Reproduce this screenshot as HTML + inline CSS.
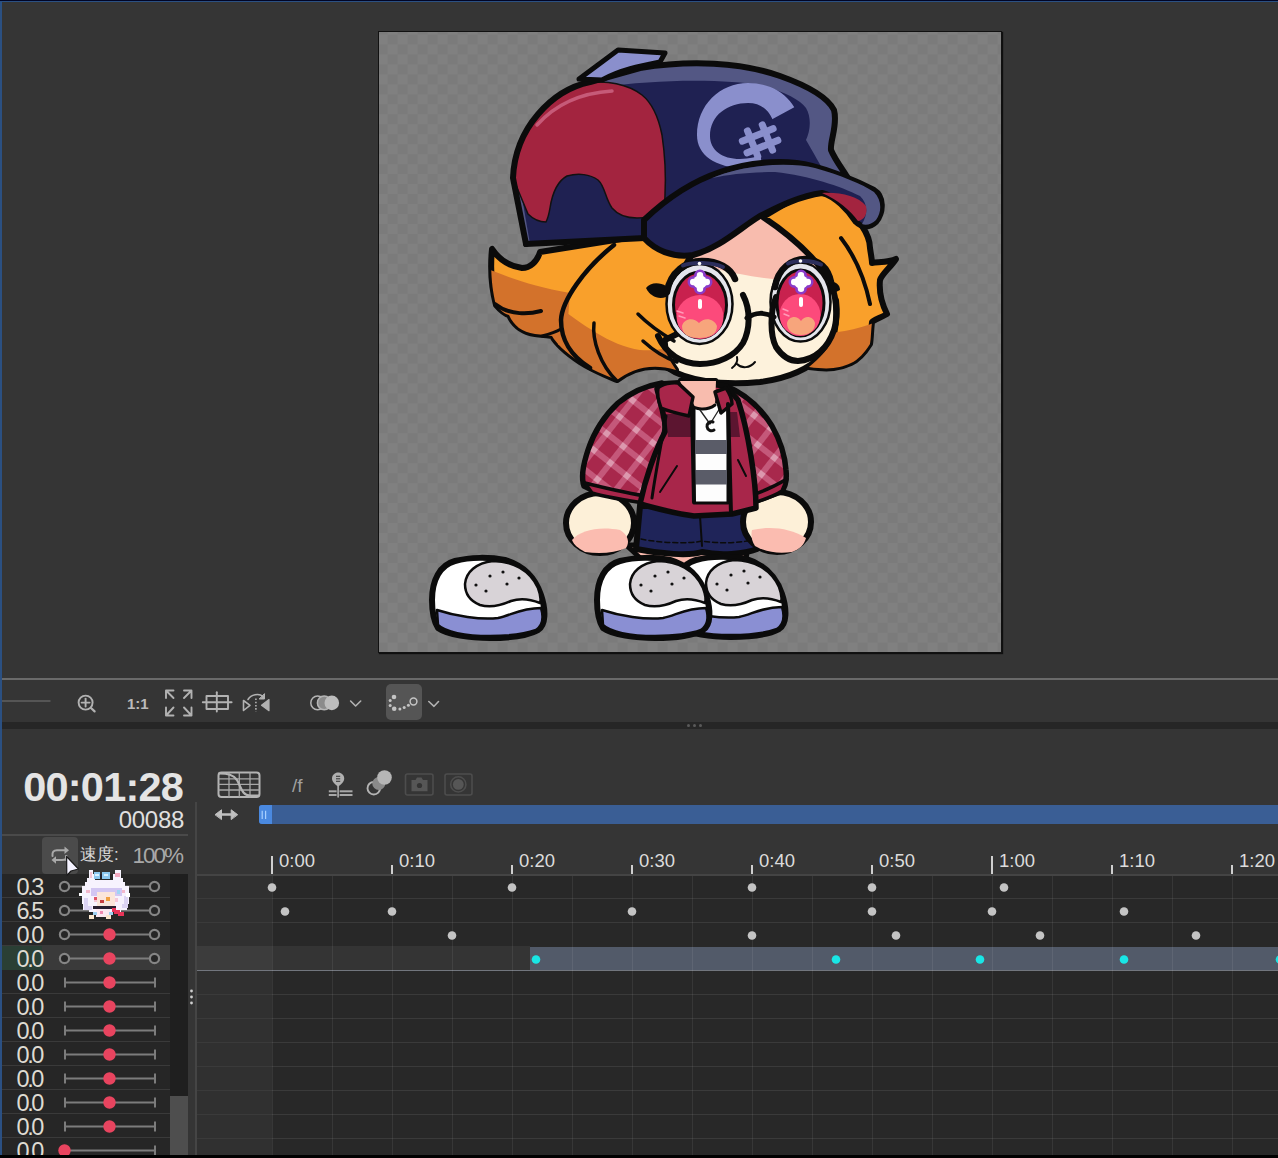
<!DOCTYPE html><html><head><meta charset="utf-8"><style>*{margin:0;padding:0;box-sizing:border-box}
html,body{width:1278px;height:1158px;overflow:hidden;background:#353535;font-family:"Liberation Sans",sans-serif}
.a{position:absolute}
#topdark{left:0;top:0;width:1278px;height:1px;background:#000526;z-index:60}
#topblue{left:0;top:1px;width:1278px;height:1px;background:#2b5082;z-index:60}
#leftblue{left:0;top:1px;width:2px;height:1158px;background:#2b5082;z-index:50}
#canvas{left:378px;top:31px;width:624px;height:622px;background:#7a7a7a;border:1px solid #111;overflow:hidden;box-shadow:1px 1px 1px rgba(0,0,0,0.7)}
#hline{left:0;top:678px;width:1278px;height:2px;background:#6a6a6a}
#band{left:0;top:722px;width:1278px;height:7px;background:#262626}
.dot3{width:3px;height:3px;border-radius:50%;background:#5a5a5a;top:724px}
#tbbtn{left:386px;top:684px;width:36px;height:36px;background:#555;border-radius:5px}
#timecode{left:10px;top:764px;width:173px;text-align:right;font-weight:bold;font-size:41.5px;letter-spacing:-0.8px;color:#e4e4e4;line-height:45px}
#frames{left:90px;top:806px;width:94px;text-align:right;font-size:24px;letter-spacing:-0.3px;color:#e0e0e0;line-height:27px}
#sep{left:0;top:834px;width:188px;height:2px;background:#4a4a4a}
#loopbtn{left:42px;top:837px;width:36px;height:37px;background:#4b4b4b;border-radius:4px}
#speed{left:80px;top:844px;font-size:17px;color:#d8d8d8;line-height:22px}
#pct{left:132.5px;top:845px;font-size:22.5px;letter-spacing:-2px;color:#a8a8a8;line-height:22px}
#leftrows{left:2px;top:874px;width:168px;height:284px;background:#262626}
.row{position:absolute;left:0;width:168px;height:24px;border-bottom:1px solid #3a3a3a}
.row.sel{background:#3a3a3a}
.val{position:absolute;left:14.5px;font-size:23.5px;letter-spacing:-2.4px;color:#dedbd2;line-height:22px}
#sb{left:170px;top:874px;width:18px;height:284px;background:#1f1f1f}
#sbthumb{left:170px;top:1096px;width:18px;height:62px;background:#4e4e4e}
#vline{left:195px;top:802px;width:2px;height:356px;background:#454545}
#bottomblack{left:0;top:1155px;width:1278px;height:3px;background:#000;z-index:70}
#bluebar{left:259px;top:805px;width:1019px;height:19px;background:#3a5e95;border-radius:3px 0 0 3px}
#handle{left:259px;top:805px;width:13px;height:19px;background:#4a89e0;border-radius:3px 0 0 3px}
</style></head><body><div id="topdark" class="a"></div><div id="topblue" class="a"></div><div id="leftblue" class="a"></div><div id="canvas" class="a"><svg width="622" height="620" viewBox="379 32 622 620" style="position:absolute;left:0;top:0"><defs><pattern id="chk" width="20" height="19.94" patternUnits="userSpaceOnUse" x="377.6" y="34.5"><rect width="20" height="19.94" fill="#7b7b7b"/><rect width="10" height="9.97" fill="#808080"/><rect x="10" y="9.97" width="10" height="9.97" fill="#808080"/></pattern></defs><rect x="379" y="32" width="622" height="620" fill="url(#chk)"/><defs>
<clipPath id="faceclip"><path d="M 650,290 C 650,240 700,212 750,212 C 800,212 845,245 845,295 C 845,345 815,375 760,382 C 720,386 685,380 668,368 C 655,350 650,320 650,290 Z"/></clipPath>
<clipPath id="lhclip"><path d="M 640,236 L 540,252 C 537,262 530,268 522,268 C 508,266 498,258 492,249 C 490,270 492,290 496,305 C 502,312 505,314 509,315 C 514,326 522,332 535,334 C 542,335 548,335 552,336 C 556,343 565,352 580,362 C 592,370 605,375 617,380 C 630,370 650,362 676,370 C 668,358 664,350 665,340 L 685,330 L 685,280 C 680,270 690,255 700,248 Z"/></clipPath>
<clipPath id="rhclip"><path d="M 763,217 L 800,195 L 845,188 L 868,215 L 862,226 C 868,235 870,242 870,248 C 871,255 872,260 872,263 C 880,262 890,262 896,259 C 890,268 882,274 880,280 C 879,290 880,300 887,314 C 880,318 874,320 872,322 C 871,330 871,338 870,344 C 865,352 858,360 851,363 C 840,368 830,370 809,367 C 820,358 830,348 834,335 C 838,315 836,295 830,280 C 815,258 790,235 763,217 Z"/></clipPath>
<clipPath id="lslv"><path d="M 657,390 C 640,392 625,396 612,405 C 598,418 590,432 586,450 C 582,465 582,478 586,486 C 588,490 592,492 596,492 L 637,502 L 668,440 Z"/></clipPath>
<clipPath id="rslv"><path d="M 730,393 C 748,400 766,414 778,432 C 784,448 787,465 786,478 C 785,488 780,493 776,495 L 753,502 L 728,440 Z"/></clipPath>
<pattern id="plaid" width="21" height="21" patternUnits="userSpaceOnUse" patternTransform="rotate(38)">
<rect width="21" height="21" fill="#a8284c"/>
<rect x="0" y="7" width="21" height="6" fill="#c4587a"/>
<rect x="7" y="0" width="6" height="21" fill="#c4587a"/>
<rect x="7" y="7" width="6" height="6" fill="#dc98ae"/>
</pattern>

</defs>
<g stroke-linejoin="round" stroke-linecap="round">
<!-- FACE -->
<path d="M 650,290 C 650,240 700,212 750,212 C 800,212 845,245 845,295 C 845,345 815,375 760,382 C 720,386 685,380 668,368 C 655,350 650,320 650,290 Z" fill="#fdf2dc" stroke="#0b0b0b" stroke-width="6"/>
<path clip-path="url(#faceclip)" d="M 640,258 C 690,262 720,270 740,274 C 770,280 800,282 850,282 L 850,200 L 640,200 Z" fill="#f8bcae"/>
<!-- neck -->
<path d="M 680,380 L 716,380 L 718,410 L 684,410 Z" fill="#f8bcae" stroke="#0b0b0b" stroke-width="4"/>
<!-- LEFT HAIR -->
<path d="M 640,236 L 540,252 C 537,262 530,268 522,268 C 508,266 498,258 492,249 C 490,270 492,290 496,305 C 502,312 505,314 509,315 C 514,326 522,332 535,334 C 542,335 548,335 552,336 C 556,343 565,352 580,362 C 592,370 605,375 617,380 C 630,370 650,362 676,370 C 668,358 664,350 665,340 L 685,330 L 685,280 C 680,270 690,255 700,248 Z" fill="#f9a02b" stroke="#0b0b0b" stroke-width="6"/>
<g clip-path="url(#lhclip)" fill="#d3722b">
<path d="M 480,266 C 505,276 530,286 570,293 L 566,345 L 480,345 Z"/>
<path d="M 560,308 C 580,322 610,346 640,350 C 660,352 680,345 700,338 L 700,400 L 555,400 Z"/>
</g>
<g fill="none" stroke="#0b0b0b">
<path d="M 495,304 C 510,316 530,314 541,311" stroke-width="4"/>
<path d="M 617,381 C 600,365 592,340 594,323" stroke-width="3.5"/>
<path d="M 614,245 C 585,268 562,300 561,320 C 561,340 570,355 590,368" stroke-width="4.5"/>
<path d="M 542,336 C 550,334 556,332 561,329" stroke-width="3"/>
<path d="M 638,314 C 650,326 662,334 674,341" stroke-width="3.5"/>
<path d="M 643,341 C 655,352 665,358 677,362" stroke-width="3.5"/>
</g>
<!-- RIGHT HAIR -->
<path d="M 763,217 L 800,195 L 845,188 L 868,215 L 862,226 C 868,235 870,242 870,248 C 871,255 872,260 872,263 C 880,262 890,262 896,259 C 890,268 882,274 880,280 C 879,290 880,300 887,314 C 880,318 874,320 872,322 C 871,330 871,338 870,344 C 865,352 858,360 851,363 C 840,368 830,370 809,367 C 820,358 830,348 834,335 C 838,315 836,295 830,280 C 815,258 790,235 763,217 Z" fill="#f9a02b" stroke="#0b0b0b" stroke-width="6"/>
<g clip-path="url(#rhclip)" fill="#d3722b"><path d="M 800,332 C 830,336 860,330 885,318 L 885,380 L 800,380 Z"/></g>
<path d="M 841,238 C 858,260 866,285 870,304" fill="none" stroke="#0b0b0b" stroke-width="4"/>
<!-- HAT DOME -->
<path d="M 526,244 L 513,178 C 515,128 552,90 590,82 L 640,68 C 690,60 740,62 780,76 C 808,86 828,98 834,110 C 838,125 830,140 831,150 C 836,162 845,172 850,182 L 760,215 L 645,240 Z" fill="#535784" stroke="none"/>
<path d="M 530,244 L 519,180 C 524,135 560,98 600,88 C 660,78 730,80 760,85 C 785,92 800,100 806,108 C 812,118 810,132 806,140 C 812,150 820,165 832,185 L 760,212 L 645,236 Z" fill="#1f2152"/>
<path d="M 513,178 C 515,130 550,92 590,83 C 605,80 628,84 642,95 C 652,103 658,115 662,135 C 665,155 666,175 665,195 C 665,204 664,208 662,212 C 656,217 648,218 637,218 C 625,218 617,214 612,208 C 605,198 605,186 598,180 C 590,174 578,173 567,176 C 556,182 552,195 550,208 C 549,214 548,218 546,222 C 538,222 532,218 528,214 Z" fill="#a3243f" stroke="#111" stroke-width="1.5"/>
<path d="M 537,125 C 555,105 580,93 612,91" fill="none" stroke="#c65a78" stroke-width="3.5"/>
<path d="M 526,244 L 513,178 C 515,128 552,90 590,82 L 640,68 C 690,60 740,62 780,76 C 808,86 828,98 834,110 C 838,125 830,140 831,150 C 836,162 845,172 850,182" fill="none" stroke="#0b0b0b" stroke-width="6"/>
<path d="M 526,244 L 645,238" fill="none" stroke="#0b0b0b" stroke-width="6"/>
<!-- tab -->
<path d="M 579,79 L 618,50 L 665,53 L 660,62 C 640,66 620,70 602,80 Z" fill="#8a8fcc" stroke="#0b0b0b" stroke-width="5"/>
<!-- C# -->
<clipPath id="cclip"><path d="M 680,60 L 815,60 L 815,96 L 758,127 L 765,200 L 680,200 Z"/></clipPath><path clip-path="url(#cclip)" fill-rule="evenodd" fill="#8a8fcc" d="M 697,135 C 697,105 720,83 748,83 C 780,83 800,105 800,128 C 800,155 775,168 745,168 C 715,168 697,155 697,135 Z M 710,136 C 710,115 728,103 748,103 C 768,103 775,120 775,133 C 775,150 760,159 740,159 C 722,159 710,150 710,136 Z"/>
<g transform="translate(760,140.5) rotate(-22)" fill="#8a8fcc">
<rect x="-11.5" y="-17" width="7" height="34" rx="3"/>
<rect x="4.5" y="-17" width="7" height="34" rx="3"/>
<rect x="-20" y="-9.5" width="40" height="7" rx="3"/>
<rect x="-20" y="3" width="40" height="7" rx="3"/>
</g>
<!-- BRIM -->
<path d="M 644,220 C 665,200 690,182 720,172 C 755,160 790,160 812,166 C 835,172 860,183 874,190 C 884,196 884,212 876,222 C 870,228 862,228 856,222 C 848,210 835,196 822,193 C 800,196 780,206 760,216 C 740,228 720,248 693,255 C 672,258 655,250 644,238 Z" fill="#1f2152" stroke="#0b0b0b" stroke-width="6"/>
<path d="M 712,178 C 745,164 790,162 815,168 C 840,175 862,184 874,192 C 882,200 882,212 876,220 C 872,224 866,226 862,224 C 868,214 868,204 860,196 C 840,186 810,176 775,172 C 750,172 730,174 712,178 Z" fill="#535784"/>
<path d="M 822,193 C 840,192 858,196 866,206 C 868,214 864,220 858,221 C 850,210 838,200 822,193 Z" fill="#a3243f"/>
<!-- EYES -->
<path d="M 646,288 C 650,282 660,282 666,286 L 666,297 C 658,300 650,296 646,288 Z" fill="#0b0b0b"/>
<path d="M 828,282 C 834,280 840,284 840,290 L 830,295 Z" fill="#0b0b0b"/>
<ellipse cx="699.5" cy="304" rx="33" ry="40" fill="#e4e5ec" stroke="#0b0b0b" stroke-width="2.5"/>
<ellipse cx="800.5" cy="302" rx="30" ry="39.5" fill="#e4e5ec" stroke="#0b0b0b" stroke-width="2.5"/>
<ellipse cx="700" cy="305" rx="26.5" ry="33" fill="#c8214e" stroke="#0b0b0b" stroke-width="3"/>
<ellipse cx="800.5" cy="303" rx="23.5" ry="33" fill="#c8214e" stroke="#0b0b0b" stroke-width="3"/>
<ellipse cx="700" cy="317" rx="23.5" ry="22" fill="#fc4a7b"/>
<ellipse cx="800" cy="315" rx="20.5" ry="21" fill="#fc4a7b"/>
<path d="M 682,326 C 684,318 694,317 699,323 C 704,317 714,318 717,326 C 717,334 710,338 699,338 C 688,338 682,334 682,326 Z" fill="#f7a57c"/>
<path d="M 787,323 C 789,316 797,315 801,321 C 805,315 813,316 815,323 C 815,331 809,335 801,335 C 793,335 787,331 787,323 Z" fill="#f7a57c"/>
<g><rect x="695.5" y="271" width="9" height="22" rx="4.5" fill="#8a3cc8" stroke="#8a3cc8" stroke-width="3"/><rect x="689" y="277.5" width="22" height="9" rx="4.5" fill="#8a3cc8" stroke="#8a3cc8" stroke-width="3"/><circle cx="700" cy="282" r="7.5" fill="#8a3cc8" stroke="#8a3cc8" stroke-width="3"/><rect x="696.8" y="272" width="6.4" height="20" rx="3.2" fill="#fff"/><rect x="690" y="278.8" width="20" height="6.4" rx="3.2" fill="#fff"/><circle cx="700" cy="282" r="6.8" fill="#fff"/></g>
<g><rect x="796.5" y="271" width="9" height="22" rx="4.5" fill="#8a3cc8" stroke="#8a3cc8" stroke-width="3"/><rect x="790" y="277.5" width="22" height="9" rx="4.5" fill="#8a3cc8" stroke="#8a3cc8" stroke-width="3"/><circle cx="801" cy="282" r="7.5" fill="#8a3cc8" stroke="#8a3cc8" stroke-width="3"/><rect x="797.8" y="272" width="6.4" height="20" rx="3.2" fill="#fff"/><rect x="791" y="278.8" width="20" height="6.4" rx="3.2" fill="#fff"/><circle cx="801" cy="282" r="6.8" fill="#fff"/></g>
<rect x="698" y="299" width="4" height="10" rx="2" fill="#fff"/>
<rect x="799" y="297" width="4" height="10" rx="2" fill="#fff"/>
<path d="M 667,292 C 670,272 686,261 702,261 C 718,261 731,268 735,279" fill="none" stroke="#0b0b0b" stroke-width="6.5"/>
<path d="M 683,265.5 C 692,262 712,262 723,267" fill="none" stroke="#2c2f5c" stroke-width="4"/>
<path d="M 775,287 C 778,268 792,259 805,259 C 819,260 828,268 831,282" fill="none" stroke="#0b0b0b" stroke-width="6.5"/>
<path d="M 788,263.5 C 796,260 812,260 821,264.5" fill="none" stroke="#2c2f5c" stroke-width="4"/>
<circle cx="699.5" cy="263.5" r="1.8" fill="#fff"/><circle cx="800.5" cy="261" r="1.8" fill="#fff"/>
<path d="M 677,311 L 683,313 M 679,316 L 685,318" stroke="#ff9ab8" stroke-width="1.5" fill="none"/>
<path d="M 783,309 L 788,311 M 784,314 L 789,316" stroke="#ff9ab8" stroke-width="1.5" fill="none"/>
<!-- frames -->
<path d="M 743,295 C 751,310 750,330 743,343 C 735,356 718,364 700,364 C 682,364 666,354 658,336" fill="none" stroke="#0b0b0b" stroke-width="6"/>
<path d="M 776,297 C 770,312 770,335 776,347 C 782,356 790,361 798,361 C 815,360 828,348 834,330 C 838,318 837,308 836,300" fill="none" stroke="#0b0b0b" stroke-width="6"/>
<path d="M 747,318 C 755,312 765,312 774,317" fill="none" stroke="#0b0b0b" stroke-width="5"/>
<path d="M 732,368 C 736,365 738,361 737,357 M 737,364 C 742,369 750,368 755,362" fill="none" stroke="#0b0b0b" stroke-width="2"/>
<!-- BODY -->
<path d="M 626,545 L 650,567 L 745,567 L 748,545 Z" fill="#fbbcb0" stroke="#0b0b0b" stroke-width="5"/>
<path d="M 640,506 L 636,549 C 660,554 690,556 702,552 C 720,556 745,554 757,549 L 752,506 Z" fill="#1f2459" stroke="#0b0b0b" stroke-width="6"/>
<path d="M 641,539 C 660,543 690,544 702,541 C 720,544 742,543 756,539" fill="none" stroke="#0b0b0b" stroke-width="1.5" stroke-dasharray="5,3"/>
<path d="M 700,516 L 702,546" fill="none" stroke="#0b0b0b" stroke-width="2"/>
<!-- hands -->
<ellipse cx="600" cy="523" rx="34" ry="30" fill="#fdf0d8" stroke="#0b0b0b" stroke-width="6"/>
<path d="M 572,540 C 580,530 600,526 620,530 C 628,535 630,542 626,548 C 615,553 600,554 585,552 C 578,548 574,545 572,540 Z" fill="#fbbcb0"/>
<ellipse cx="777" cy="522" rx="34" ry="30" fill="#fdf0d8" stroke="#0b0b0b" stroke-width="6"/>
<path d="M 752,530 C 770,526 790,528 806,538 C 804,545 800,549 792,552 C 778,554 765,552 755,546 C 751,540 751,534 752,530 Z" fill="#fbbcb0"/>
<!-- sleeves -->
<path d="M 662,383 C 645,386 630,393 618,403 C 604,416 594,432 588,450 C 583,465 581,478 584,486 L 594,491 L 648,501 L 666,440 Z" fill="url(#plaid)" stroke="#0b0b0b" stroke-width="5.5"/>
<path d="M 585,483 C 605,488 630,494 652,497 L 651,504 C 630,501 605,497 592,493 Z" fill="#a8264a" stroke="#0b0b0b" stroke-width="3.5"/>
<path d="M 726,386 C 746,394 762,410 772,426 C 780,440 785,456 786,470 C 787,480 785,488 781,492 L 756,501 L 733,440 Z" fill="url(#plaid)" stroke="#0b0b0b" stroke-width="5.5"/>
<path d="M 787,479 C 775,486 765,491 752,495 L 753,503 C 766,499 776,495 782,491 Z" fill="#a8264a" stroke="#0b0b0b" stroke-width="3.5"/>
<!-- jacket -->
<path d="M 660,384 L 690,382 L 726,386 L 738,400 C 748,430 756,480 756,508 L 732,514 L 694,516 C 672,513 655,508 640,504 C 645,480 655,450 666,430 C 664,415 660,400 657,389 Z" fill="#a8264a" stroke="#0b0b0b" stroke-width="5.5"/>
<path d="M 666,414 L 692,414 L 692,437 L 668,437 Z" fill="#5c1530"/>
<path d="M 727,412 L 737,412 L 740,437 L 727,437 Z" fill="#5c1530"/>
<!-- shirt -->
<path d="M 694,402 L 728,402 L 728,503 L 694,503 Z" fill="#fdfdfd" stroke="#0b0b0b" stroke-width="3"/>
<rect x="695" y="440" width="32" height="14" fill="#5a5c68"/>
<rect x="695" y="470" width="32" height="14.5" fill="#5a5c68"/>
<path d="M 680,381 L 716,381 L 715,405 C 705,410 695,409 690,404 Z" fill="#f8bcae" stroke="none"/><path d="M 690,404 C 695,410 707,411 715,405" fill="none" stroke="#0b0b0b" stroke-width="3"/>
<path d="M 700,410 L 710,424 L 720,408" fill="none" stroke="#222" stroke-width="1.3"/>
<path d="M 713,422 a 4.5 4.5 0 1 0 1 8" fill="none" stroke="#111" stroke-width="3"/>
<path d="M 658,388 C 662,384 672,382 678,383 L 693,397 L 689,416 C 680,414 668,411 661,408 C 658,400 657,393 658,388 Z" fill="#a8264a" stroke="#0b0b0b" stroke-width="3.5"/>
<path d="M 715,392 L 726,388 C 730,394 732,400 732,404 L 721,413 Z" fill="#a8264a" stroke="#0b0b0b" stroke-width="3.5"/>
<path d="M 692,405 L 694,502 M 728,404 L 731,514" fill="none" stroke="#0b0b0b" stroke-width="4"/>
<path d="M 666,416 C 662,440 656,470 652,498" fill="none" stroke="#0b0b0b" stroke-width="3"/>
<path d="M 677,466 L 660,492 M 738,460 L 746,476" fill="none" stroke="#0b0b0b" stroke-width="2"/>
<!-- shoes -->
<g transform="translate(241,-1)">
<path d="M 432,600 C 432,580 440,565 455,561 C 470,557 490,557 505,560 C 522,565 535,577 541,595 C 546,610 546,625 538,630 C 525,637 505,638 490,638 C 470,638 448,635 438,628 C 433,620 432,610 432,600 Z" fill="#ffffff" stroke="#0b0b0b" stroke-width="6"/>
<path d="M 465,584 C 466,572 476,563 493,561 C 512,561 530,570 538,588 C 541,596 541,600 540,603 C 530,599 520,598 511,601 C 500,606 490,608 480,605 C 470,601 465,594 465,584 Z" fill="#d8d3d7" stroke="#0b0b0b" stroke-width="2.5"/>
<path d="M 437,610 C 455,616 480,620 498,618 C 510,616 520,608 541,608 C 544,618 542,626 536,630 C 520,636 500,636 490,636 C 465,636 445,632 438,625 Z" fill="#8a8fd3" stroke="#0b0b0b" stroke-width="2.5"/>
<g fill="#111"><circle cx="476" cy="585" r="1.6"/><circle cx="486" cy="591" r="1.6"/><circle cx="490" cy="576" r="1.6"/><circle cx="503" cy="572" r="1.6"/><circle cx="507" cy="584" r="1.6"/><circle cx="519" cy="578" r="1.6"/></g>
</g>
<g>
<path d="M 432,600 C 432,580 440,565 455,561 C 470,557 490,557 505,560 C 522,565 535,577 541,595 C 546,610 546,625 538,630 C 525,637 505,638 490,638 C 470,638 448,635 438,628 C 433,620 432,610 432,600 Z" fill="#ffffff" stroke="#0b0b0b" stroke-width="6"/>
<path d="M 465,584 C 466,572 476,563 493,561 C 512,561 530,570 538,588 C 541,596 541,600 540,603 C 530,599 520,598 511,601 C 500,606 490,608 480,605 C 470,601 465,594 465,584 Z" fill="#d8d3d7" stroke="#0b0b0b" stroke-width="2.5"/>
<path d="M 437,610 C 455,616 480,620 498,618 C 510,616 520,608 541,608 C 544,618 542,626 536,630 C 520,636 500,636 490,636 C 465,636 445,632 438,625 Z" fill="#8a8fd3" stroke="#0b0b0b" stroke-width="2.5"/>
<g fill="#111"><circle cx="476" cy="585" r="1.6"/><circle cx="486" cy="591" r="1.6"/><circle cx="490" cy="576" r="1.6"/><circle cx="503" cy="572" r="1.6"/><circle cx="507" cy="584" r="1.6"/><circle cx="519" cy="578" r="1.6"/></g>
</g>
<g transform="translate(165,0)">
<path d="M 432,600 C 432,580 440,565 455,561 C 470,557 490,557 505,560 C 522,565 535,577 541,595 C 546,610 546,625 538,630 C 525,637 505,638 490,638 C 470,638 448,635 438,628 C 433,620 432,610 432,600 Z" fill="#ffffff" stroke="#0b0b0b" stroke-width="6"/>
<path d="M 465,584 C 466,572 476,563 493,561 C 512,561 530,570 538,588 C 541,596 541,600 540,603 C 530,599 520,598 511,601 C 500,606 490,608 480,605 C 470,601 465,594 465,584 Z" fill="#d8d3d7" stroke="#0b0b0b" stroke-width="2.5"/>
<path d="M 437,610 C 455,616 480,620 498,618 C 510,616 520,608 541,608 C 544,618 542,626 536,630 C 520,636 500,636 490,636 C 465,636 445,632 438,625 Z" fill="#8a8fd3" stroke="#0b0b0b" stroke-width="2.5"/>
<g fill="#111"><circle cx="476" cy="585" r="1.6"/><circle cx="486" cy="591" r="1.6"/><circle cx="490" cy="576" r="1.6"/><circle cx="503" cy="572" r="1.6"/><circle cx="507" cy="584" r="1.6"/><circle cx="519" cy="578" r="1.6"/></g>
</g>
</g>
</svg></div><div id="hline" class="a"></div><div id="band" class="a"></div><div class="a dot3" style="left:687px"></div><div class="a dot3" style="left:693px"></div><div class="a dot3" style="left:699px"></div><div id="tbbtn" class="a"></div><div id="timecode" class="a">00:01:28</div><div id="frames" class="a">00088</div><div id="sep" class="a"></div><div id="loopbtn" class="a"></div><div id="speed" class="a">速度:</div><div id="pct" class="a">100%</div><div id="vline" class="a"></div><div id="bluebar" class="a"></div><div id="handle" class="a"></div><div id="leftrows" class="a"><div class="row" style="top:0px"></div><div class="val" style="top:2px">0.3</div><div class="row" style="top:24px"></div><div class="val" style="top:26px">6.5</div><div class="row" style="top:48px"></div><div class="val" style="top:50px">0.0</div><div class="row sel" style="top:72px"></div><div style="position:absolute;left:0;top:72px;width:40px;height:24px;background:#2a3f35"></div><div class="val" style="top:74px">0.0</div><div class="row" style="top:96px"></div><div class="val" style="top:98px">0.0</div><div class="row" style="top:120px"></div><div class="val" style="top:122px">0.0</div><div class="row" style="top:144px"></div><div class="val" style="top:146px">0.0</div><div class="row" style="top:168px"></div><div class="val" style="top:170px">0.0</div><div class="row" style="top:192px"></div><div class="val" style="top:194px">0.0</div><div class="row" style="top:216px"></div><div class="val" style="top:218px">0.0</div><div class="row" style="top:240px"></div><div class="val" style="top:242px">0.0</div><div class="row" style="top:264px"></div><div class="val" style="top:266px">0.0</div></div><svg class="a" style="left:0;top:0;z-index:5" width="200" height="1158"><line x1="64.5" y1="886.5" x2="154.5" y2="886.5" stroke="#7c7c7c" stroke-width="2"/><circle cx="64.5" cy="886.5" r="4.6" fill="#262626" stroke="#858585" stroke-width="2.2"/><circle cx="154.5" cy="886.5" r="4.6" fill="#262626" stroke="#858585" stroke-width="2.2"/><line x1="64.5" y1="910.5" x2="154.5" y2="910.5" stroke="#7c7c7c" stroke-width="2"/><circle cx="64.5" cy="910.5" r="4.6" fill="#262626" stroke="#858585" stroke-width="2.2"/><circle cx="154.5" cy="910.5" r="4.6" fill="#262626" stroke="#858585" stroke-width="2.2"/><line x1="64.5" y1="934.5" x2="154.5" y2="934.5" stroke="#7c7c7c" stroke-width="2"/><circle cx="64.5" cy="934.5" r="4.6" fill="#262626" stroke="#858585" stroke-width="2.2"/><circle cx="154.5" cy="934.5" r="4.6" fill="#262626" stroke="#858585" stroke-width="2.2"/><circle cx="109.5" cy="934.5" r="6.2" fill="#e8445f"/><line x1="64.5" y1="958.5" x2="154.5" y2="958.5" stroke="#7c7c7c" stroke-width="2"/><circle cx="64.5" cy="958.5" r="4.6" fill="#262626" stroke="#858585" stroke-width="2.2"/><circle cx="154.5" cy="958.5" r="4.6" fill="#262626" stroke="#858585" stroke-width="2.2"/><circle cx="109.5" cy="958.5" r="6.2" fill="#e8445f"/><line x1="65" y1="982.5" x2="155" y2="982.5" stroke="#7c7c7c" stroke-width="2"/><line x1="65" y1="977.5" x2="65" y2="987.5" stroke="#7c7c7c" stroke-width="2"/><line x1="155" y1="977.5" x2="155" y2="987.5" stroke="#7c7c7c" stroke-width="2"/><circle cx="109.5" cy="982.5" r="6.2" fill="#e8445f"/><line x1="65" y1="1006.5" x2="155" y2="1006.5" stroke="#7c7c7c" stroke-width="2"/><line x1="65" y1="1001.5" x2="65" y2="1011.5" stroke="#7c7c7c" stroke-width="2"/><line x1="155" y1="1001.5" x2="155" y2="1011.5" stroke="#7c7c7c" stroke-width="2"/><circle cx="109.5" cy="1006.5" r="6.2" fill="#e8445f"/><line x1="65" y1="1030.5" x2="155" y2="1030.5" stroke="#7c7c7c" stroke-width="2"/><line x1="65" y1="1025.5" x2="65" y2="1035.5" stroke="#7c7c7c" stroke-width="2"/><line x1="155" y1="1025.5" x2="155" y2="1035.5" stroke="#7c7c7c" stroke-width="2"/><circle cx="109.5" cy="1030.5" r="6.2" fill="#e8445f"/><line x1="65" y1="1054.5" x2="155" y2="1054.5" stroke="#7c7c7c" stroke-width="2"/><line x1="65" y1="1049.5" x2="65" y2="1059.5" stroke="#7c7c7c" stroke-width="2"/><line x1="155" y1="1049.5" x2="155" y2="1059.5" stroke="#7c7c7c" stroke-width="2"/><circle cx="109.5" cy="1054.5" r="6.2" fill="#e8445f"/><line x1="65" y1="1078.5" x2="155" y2="1078.5" stroke="#7c7c7c" stroke-width="2"/><line x1="65" y1="1073.5" x2="65" y2="1083.5" stroke="#7c7c7c" stroke-width="2"/><line x1="155" y1="1073.5" x2="155" y2="1083.5" stroke="#7c7c7c" stroke-width="2"/><circle cx="109.5" cy="1078.5" r="6.2" fill="#e8445f"/><line x1="65" y1="1102.5" x2="155" y2="1102.5" stroke="#7c7c7c" stroke-width="2"/><line x1="65" y1="1097.5" x2="65" y2="1107.5" stroke="#7c7c7c" stroke-width="2"/><line x1="155" y1="1097.5" x2="155" y2="1107.5" stroke="#7c7c7c" stroke-width="2"/><circle cx="109.5" cy="1102.5" r="6.2" fill="#e8445f"/><line x1="65" y1="1126.5" x2="155" y2="1126.5" stroke="#7c7c7c" stroke-width="2"/><line x1="65" y1="1121.5" x2="65" y2="1131.5" stroke="#7c7c7c" stroke-width="2"/><line x1="155" y1="1121.5" x2="155" y2="1131.5" stroke="#7c7c7c" stroke-width="2"/><circle cx="109.5" cy="1126.5" r="6.2" fill="#e8445f"/><line x1="65" y1="1150.5" x2="155" y2="1150.5" stroke="#7c7c7c" stroke-width="2"/><line x1="65" y1="1145.5" x2="65" y2="1155.5" stroke="#7c7c7c" stroke-width="2"/><line x1="155" y1="1145.5" x2="155" y2="1155.5" stroke="#7c7c7c" stroke-width="2"/><circle cx="64.5" cy="1150.5" r="6.2" fill="#e8445f"/></svg><div id="sb" class="a"></div><div id="sbthumb" class="a"></div><svg class="a" style="left:0;top:0" width="1278" height="1158"><rect x="197" y="875" width="1081" height="283" fill="#282828"/><rect x="197" y="875" width="75" height="283" fill="#303030"/><rect x="197" y="946" width="75" height="24" fill="#3c3c3c"/><rect x="272" y="946" width="258" height="24" fill="#343434"/><rect x="530" y="947" width="748" height="24" fill="#525a69"/><rect x="197" y="874" width="1081" height="1" fill="#3a3a3a"/><rect x="197" y="898" width="1081" height="1" fill="#3a3a3a"/><rect x="197" y="922" width="1081" height="1" fill="#3a3a3a"/><rect x="197" y="970" width="1081" height="1" fill="#72767e"/><rect x="197" y="994" width="1081" height="1" fill="#3a3a3a"/><rect x="197" y="1018" width="1081" height="1" fill="#3a3a3a"/><rect x="197" y="1042" width="1081" height="1" fill="#3a3a3a"/><rect x="197" y="1066" width="1081" height="1" fill="#3a3a3a"/><rect x="197" y="1090" width="1081" height="1" fill="#3a3a3a"/><rect x="197" y="1114" width="1081" height="1" fill="#3a3a3a"/><rect x="197" y="1138" width="1081" height="1" fill="#3a3a3a"/><rect x="197" y="874" width="1081" height="2" fill="#444"/><rect x="272" y="876" width="1" height="283" fill="#ffffff" fill-opacity="0.07"/><rect x="332" y="876" width="1" height="283" fill="#ffffff" fill-opacity="0.07"/><rect x="392" y="876" width="1" height="283" fill="#ffffff" fill-opacity="0.07"/><rect x="452" y="876" width="1" height="283" fill="#ffffff" fill-opacity="0.07"/><rect x="512" y="876" width="1" height="283" fill="#ffffff" fill-opacity="0.07"/><rect x="572" y="876" width="1" height="283" fill="#ffffff" fill-opacity="0.07"/><rect x="632" y="876" width="1" height="283" fill="#ffffff" fill-opacity="0.07"/><rect x="692" y="876" width="1" height="283" fill="#ffffff" fill-opacity="0.07"/><rect x="752" y="876" width="1" height="283" fill="#ffffff" fill-opacity="0.07"/><rect x="812" y="876" width="1" height="283" fill="#ffffff" fill-opacity="0.07"/><rect x="872" y="876" width="1" height="283" fill="#ffffff" fill-opacity="0.07"/><rect x="932" y="876" width="1" height="283" fill="#ffffff" fill-opacity="0.07"/><rect x="992" y="876" width="1" height="283" fill="#ffffff" fill-opacity="0.07"/><rect x="1052" y="876" width="1" height="283" fill="#ffffff" fill-opacity="0.07"/><rect x="1112" y="876" width="1" height="283" fill="#ffffff" fill-opacity="0.07"/><rect x="1172" y="876" width="1" height="283" fill="#ffffff" fill-opacity="0.07"/><rect x="1232" y="876" width="1" height="283" fill="#ffffff" fill-opacity="0.07"/><rect x="271" y="856" width="2" height="18" fill="#cfcfcf"/><text x="279" y="867" font-size="18.5" fill="#dcdcdc" font-family="Liberation Sans">0:00</text><rect x="391" y="865" width="2" height="9" fill="#cfcfcf"/><text x="399" y="867" font-size="18.5" fill="#dcdcdc" font-family="Liberation Sans">0:10</text><rect x="511" y="865" width="2" height="9" fill="#cfcfcf"/><text x="519" y="867" font-size="18.5" fill="#dcdcdc" font-family="Liberation Sans">0:20</text><rect x="631" y="865" width="2" height="9" fill="#cfcfcf"/><text x="639" y="867" font-size="18.5" fill="#dcdcdc" font-family="Liberation Sans">0:30</text><rect x="751" y="865" width="2" height="9" fill="#cfcfcf"/><text x="759" y="867" font-size="18.5" fill="#dcdcdc" font-family="Liberation Sans">0:40</text><rect x="871" y="865" width="2" height="9" fill="#cfcfcf"/><text x="879" y="867" font-size="18.5" fill="#dcdcdc" font-family="Liberation Sans">0:50</text><rect x="991" y="856" width="2" height="18" fill="#cfcfcf"/><text x="999" y="867" font-size="18.5" fill="#dcdcdc" font-family="Liberation Sans">1:00</text><rect x="1111" y="865" width="2" height="9" fill="#cfcfcf"/><text x="1119" y="867" font-size="18.5" fill="#dcdcdc" font-family="Liberation Sans">1:10</text><rect x="1231" y="865" width="2" height="9" fill="#cfcfcf"/><text x="1239" y="867" font-size="18.5" fill="#dcdcdc" font-family="Liberation Sans">1:20</text><circle cx="272" cy="887.5" r="4.3" fill="#c4c4c4"/><circle cx="512" cy="887.5" r="4.3" fill="#c4c4c4"/><circle cx="752" cy="887.5" r="4.3" fill="#c4c4c4"/><circle cx="872" cy="887.5" r="4.3" fill="#c4c4c4"/><circle cx="1004" cy="887.5" r="4.3" fill="#c4c4c4"/><circle cx="285" cy="911.5" r="4.3" fill="#c4c4c4"/><circle cx="392" cy="911.5" r="4.3" fill="#c4c4c4"/><circle cx="632" cy="911.5" r="4.3" fill="#c4c4c4"/><circle cx="872" cy="911.5" r="4.3" fill="#c4c4c4"/><circle cx="992" cy="911.5" r="4.3" fill="#c4c4c4"/><circle cx="1124" cy="911.5" r="4.3" fill="#c4c4c4"/><circle cx="452" cy="935.5" r="4.3" fill="#c4c4c4"/><circle cx="752" cy="935.5" r="4.3" fill="#c4c4c4"/><circle cx="896" cy="935.5" r="4.3" fill="#c4c4c4"/><circle cx="1040" cy="935.5" r="4.3" fill="#c4c4c4"/><circle cx="1196" cy="935.5" r="4.3" fill="#c4c4c4"/><circle cx="536" cy="959.5" r="4.3" fill="#19e6e6"/><circle cx="836" cy="959.5" r="4.3" fill="#19e6e6"/><circle cx="980" cy="959.5" r="4.3" fill="#19e6e6"/><circle cx="1124" cy="959.5" r="4.3" fill="#19e6e6"/><circle cx="1280" cy="959.5" r="4.3" fill="#19e6e6"/><circle cx="191.5" cy="991" r="1.4" fill="#cfcfcf"/><circle cx="191.5" cy="997" r="1.4" fill="#cfcfcf"/><circle cx="191.5" cy="1003" r="1.4" fill="#cfcfcf"/></svg><svg class="a" style="left:0;top:0;z-index:20" width="500" height="1158">
<g fill="none" stroke="#b2b2b2" stroke-width="1.9" stroke-linecap="round" stroke-linejoin="round">
<!-- toolbar slider line -->
<line x1="0" y1="701" x2="50.5" y2="701" stroke="#555" stroke-width="2" stroke-linecap="butt"/>
<!-- zoom in -->
<circle cx="85.6" cy="702.6" r="7"/>
<line x1="81.6" y1="702.6" x2="89.6" y2="702.6"/>
<line x1="85.6" y1="698.6" x2="85.6" y2="706.6"/>
<line x1="91" y1="708" x2="94.6" y2="711.4" stroke-width="2.2"/>
<!-- expand -->
<path d="M166,698 V690.5 H173.5 M166,690.5 L173.5,698"/>
<path d="M191.5,698 V690.5 H184 M191.5,690.5 L184,698"/>
<path d="M166,707.5 V715.5 H173.5 M166,715.5 L173.5,707.5"/>
<path d="M191.5,707.5 V715.5 H184 M191.5,715.5 L184,707.5"/>
<!-- grid icon -->
<rect x="206.5" y="696" width="21.5" height="13" stroke-linecap="butt"/>
<line x1="202.8" y1="702.3" x2="231.6" y2="702.3"/>
<line x1="216.8" y1="692.3" x2="216.8" y2="711.6"/>
<!-- flip -->
<path d="M243.5,700.5 L250,705.3 L243.5,710.5 Z" stroke-width="1.6"/>
<path d="M269,699.5 L261.5,705.3 L269,710.7 Z" fill="#b2b2b2" stroke-width="1.2"/>
<line x1="255.9" y1="698.5" x2="255.9" y2="711.5" stroke-dasharray="1.6,1.6" stroke-linecap="butt" stroke-width="1.6"/>
<path d="M248,699.5 C251,694.5 259,693 263,696.5" stroke-width="1.6"/>
<path d="M264.5,694 L264.5,699 L259.5,699 Z" fill="#b2b2b2" stroke-width="1"/>
<!-- onion -->
<circle cx="317.6" cy="702.9" r="6.8" stroke="#b5b5b5" stroke-width="1.5"/>
<circle cx="324.2" cy="702.9" r="6.8" fill="#8b8b8b" stroke="#b5b5b5" stroke-width="1.5"/>
<circle cx="331.8" cy="702.9" r="7.3" fill="#bdbdbd" stroke="none"/>
<path d="M350.6,701 L355.6,706 L360.7,701" stroke-width="1.6"/>
<!-- motion path -->
<g fill="#c4c4c4" stroke="none">
<circle cx="394" cy="697" r="2.3"/><circle cx="390.2" cy="700.4" r="1.5"/><circle cx="390.2" cy="705.4" r="1.5"/>
<circle cx="394.2" cy="708.8" r="2.3"/><circle cx="399.9" cy="709" r="1.5"/><circle cx="404.2" cy="707.5" r="1.5"/><circle cx="408.4" cy="705.2" r="1.5"/>
</g>
<circle cx="413.5" cy="701.5" r="3.4" stroke="#c4c4c4" stroke-width="1.5"/>
<path d="M428.8,701.5 L434,706.3 L438.5,701.5" stroke-width="1.6"/>
</g>
<text x="127" y="709.3" font-family="Liberation Sans" font-weight="bold" font-size="15" fill="#bababa">1:1</text>

<!-- timeline icons -->
<g fill="none" stroke="#b4b4b4" stroke-width="2" stroke-linecap="round" stroke-linejoin="round">
<rect x="218.5" y="772.5" width="41" height="24.5" rx="3"/>
<g stroke-width="1.3" stroke="#a8a8a8"><line x1="229" y1="773" x2="229" y2="797"/><line x1="239.3" y1="773" x2="239.3" y2="797"/><line x1="250" y1="773" x2="250" y2="797"/>
<line x1="219" y1="778.8" x2="259" y2="778.8"/><line x1="219" y1="784.4" x2="259" y2="784.4"/><line x1="219" y1="790" x2="259" y2="790"/></g>
<path d="M219,773.5 C228,773.5 233,774.5 237,780 C241,787 242,795.5 250,795.5 L259,795.5" stroke-width="2.2"/>
<!-- arrow -->
<line x1="219" y1="814.5" x2="234" y2="814.5" stroke="#c0c0c0" stroke-width="2.6"/>
<path d="M215.3,814.5 L221.5,809.8 L221.5,819.2 Z M237.4,814.5 L231.2,809.8 L231.2,819.2 Z" fill="#c0c0c0" stroke="#c0c0c0" stroke-width="1"/>
<!-- pin -->
<path d="M338.1,797 L338.1,785" stroke="#b0b0b0" stroke-width="1.6"/>
<path d="M332,778.5 C332,775 335,772.5 338.1,772.5 C341.2,772.5 344.2,775 344.2,778.5 C344.2,782 341,784.5 338.1,786.5 C335.2,784.5 332,782 332,778.5 Z" fill="#b0b0b0" stroke="none"/>
<g stroke="#3a3a3a" stroke-width="1.1" stroke-linecap="butt"><line x1="336" y1="776.3" x2="340.2" y2="776.3"/><line x1="336" y1="778.8" x2="340.2" y2="778.8"/><line x1="336" y1="781.3" x2="340.2" y2="781.3"/></g>
<g stroke="#a8a8a8" stroke-width="2" stroke-linecap="butt"><line x1="328.8" y1="791.3" x2="336.6" y2="791.3"/><line x1="339.6" y1="791.3" x2="352.5" y2="791.3"/><line x1="328.8" y1="795" x2="336.6" y2="795"/><line x1="339.6" y1="795" x2="352.5" y2="795"/></g>
<!-- overlap -->
<circle cx="373.8" cy="788.2" r="6.3" stroke="#b4b4b4" stroke-width="1.9"/>
<circle cx="378.8" cy="783.5" r="6.5" fill="#8a8a8a" stroke="none"/>
<circle cx="384.5" cy="777.5" r="7.3" fill="#b6b6b6" stroke="none"/>
<!-- camera (dim) -->
<g stroke="#4d4d4d" stroke-width="1.6">
<rect x="405.5" y="774" width="27.5" height="21" rx="2"/>
<rect x="445" y="774" width="27" height="21" rx="2"/>
<circle cx="458.3" cy="784.4" r="7.6"/>
</g>
<path d="M411.5,780 H415.5 L417,777.5 H421.5 L423,780 H427.5 V791.3 H411.5 Z" fill="#565656" stroke="none"/>
<circle cx="419.5" cy="785.5" r="2.6" fill="#333" stroke="none"/>
<circle cx="458.3" cy="784.4" r="5.4" fill="#565656" stroke="none"/>
</g>
<text x="292" y="791.5" font-family="Liberation Sans" font-size="19" fill="#a0a0a0">/f</text>

<!-- handle lines -->
<line x1="262.2" y1="810.8" x2="262.2" y2="819" stroke="#a8d0ff" stroke-width="1.2"/>
<line x1="265.6" y1="810.8" x2="265.6" y2="819" stroke="#a8d0ff" stroke-width="1.2"/>

<!-- loop icon -->
<g fill="none" stroke="#a9a9a9" stroke-width="2" stroke-linecap="round" stroke-linejoin="round">
<path d="M52.5,856 C52,852 53.5,850.3 57,850.3 L65,850.3"/>
<path d="M66,860 C66.5,856.5 66,860 66,856 M66.5,856 C67,859 65.5,860 62,860 L54.5,860"/>
</g>
<path d="M64.5,846.5 L69,850.3 L64.5,854 Z M56,856.3 L51.5,860 L56,863.7 Z" fill="#a9a9a9"/>
<!-- cursor -->
<path d="M66.6,856.5 L66.8,875.5 L71,871 L78.5,869 Z" fill="#f4f2ff" stroke="#1a1a1a" stroke-width="1.2" stroke-linejoin="round"/>
</svg>
<!-- mascot -->
<svg class="a" style="left:0;top:0;z-index:21" width="200" height="1158" shape-rendering="crispEdges">
<g>
<path d="M89,870 L93,870 L93,874 L95,874 L95,880 L113,880 L113,874 L115,874 L115,870 L121,870 L121,878 L123,878 L123,882 L125,882 L125,886 L129,886 L129,904 L127,904 L127,910 L121,910 L121,912 L89,912 L89,910 L83,910 L83,904 L82,904 L82,886 L85,886 L85,882 L87,882 L87,878 L89,878 Z" fill="#f7f3fe"/>
<rect x="90" y="872" width="2" height="6" fill="#f4c4d4"/>
<rect x="115" y="873" width="5" height="4" fill="#f3a9c0"/>
<path d="M94,872 L100,872 L100,874 L102,874 L102,872 L110,872 L110,879 L102,879 L102,877 L100,877 L100,879 L94,879 Z" fill="#8cc8f0"/>
<rect x="100" y="874" width="2" height="3" fill="#223"/>
<rect x="95" y="874" width="4" height="2" fill="#d8f0ff"/><rect x="104" y="874" width="4" height="2" fill="#d8f0ff"/>
<rect x="91" y="888" width="31" height="8" fill="#d2c6f2"/>
<rect x="86" y="890" width="4" height="3" fill="#f2b8cc"/><rect x="122" y="890" width="3" height="3" fill="#f2b8cc"/><rect x="117" y="890" width="3" height="4" fill="#9fd4f4"/>
<rect x="97" y="892" width="18" height="14" fill="#fbe6da"/>
<rect x="94" y="898" width="3" height="4" fill="#f6c8d8"/><rect x="115" y="898" width="3" height="4" fill="#f6c8d8"/>
<rect x="94" y="897" width="3" height="3" fill="#e05868"/>
<rect x="106" y="897" width="4" height="4" fill="#f0a040"/>
<rect x="100" y="900" width="4" height="3" fill="#c84040"/>
<path d="M84,898 L88,898 L88,906 L92,906 L92,910 L84,910 Z" fill="#dcd4f4"/>
<path d="M124,896 L128,896 L128,908 L122,908 L122,904 L124,904 Z" fill="#dcd4f4"/>
<rect x="93" y="906" width="23" height="3" fill="#2a2030"/>
<rect x="96" y="909" width="14" height="8" fill="#fde8f0"/>
<rect x="100" y="911" width="3" height="3" fill="#f08ab0"/>
<rect x="93" y="912" width="4" height="3" fill="#9fd0f0"/><rect x="109" y="912" width="4" height="3" fill="#9fd0f0"/>
<path d="M112,908 L116,908 L116,910 L120,910 L120,912 L124,912 L124,916 L118,916 L118,914 L114,914 L114,912 L112,912 Z" fill="#e83458"/>
<rect x="89" y="915" width="5" height="4" fill="#fbe6cc"/>
<rect x="106" y="915" width="5" height="4" fill="#fbe6cc"/>
<rect x="79" y="893" width="3" height="3" fill="#ffffff"/>
<rect x="126" y="893" width="4" height="4" fill="#ffffff"/>
</g>
</svg>
<div id="bottomblack" class="a"></div></body></html>
